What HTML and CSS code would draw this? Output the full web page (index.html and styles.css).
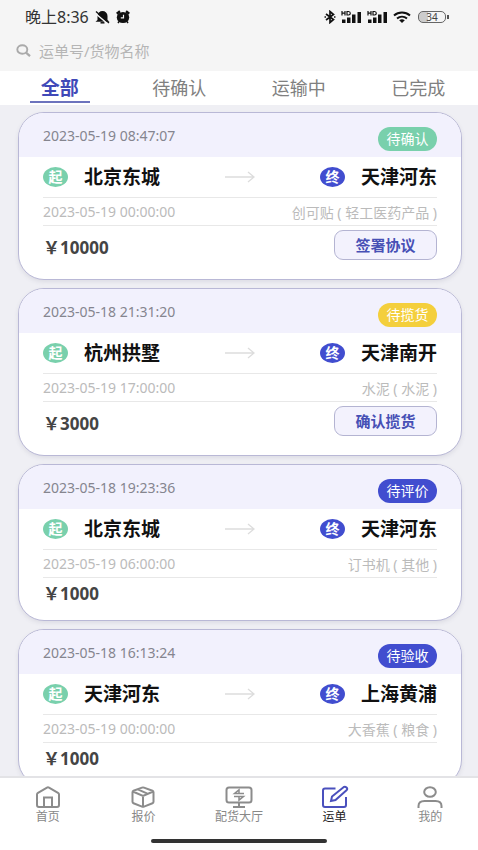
FILE: index.html
```html
<!DOCTYPE html>
<html lang="zh-CN">
<head>
<meta charset="utf-8">
<meta name="viewport" content="width=device-width, initial-scale=1">
<title>运单</title>
<link rel="stylesheet" href="styles.css">
</head>
<body>
<div class="app">
  <header class="top">
    <div class="status-bar">
      <div class="status-group status-left">
        <span class="clock">晚上8:36</span>
        <svg width="15" height="14" viewBox="0 0 15 14"><path d="M2.500 10V6a5 5 0 0 1 10 0v4l2 1.800H.5z" fill="#111"/><path d="M5.500 12.800h4" stroke="#111" stroke-width="1.500"/><path d="M0 3l13 11" stroke="#f5f5f5" stroke-width="1.500"/><path d="M1 1.500l13 11.500" stroke="#111" stroke-width="1.300"/></svg>
        <svg width="14" height="14" viewBox="0 0 14 14"><ellipse cx="7" cy="7.500" rx="6.200" ry="5.500" fill="#111"/><path d="M.8 3.800L4 1.200M13.200 3.800L10 1.200" stroke="#111" stroke-width="2.400"/><path d="M3 11.500L2 13M11 11.500l1 1.500" stroke="#111" stroke-width="1.500"/><path d="M7.500 4.800v3H4.800" stroke="#f5f5f5" stroke-width="1.200" fill="none"/></svg>
      </div>
      <div class="status-group status-right">
        <svg width="12" height="14" viewBox="0 0 12 14"><path d="M2 4l7.500 5.500L6 12.500v-11l3.500 3L2 10" fill="none" stroke="#111" stroke-width="1.700"/><path d="M.5 7h1.500M10 7h1.500" stroke="#111" stroke-width="1.500"/></svg>
        <svg width="21" height="14" viewBox="0 0 21 14"><use href="#signal"/></svg>
        <svg width="21" height="14" viewBox="0 0 21 14"><use href="#signal"/></svg>
        <svg width="18" height="14" viewBox="0 0 18 14"><path d="M1 5.500a12 12 0 0 1 16 0M4 8.500a8 8 0 0 1 10 0" fill="none" stroke="#111" stroke-width="2"/><path d="M6.200 10.300a5 5 0 0 1 5.600 0L9 13z" fill="#111"/></svg>
        <span class="battery"><span class="battery-level">34</span></span>
      </div>
    </div>
    <label class="search">
      <svg width="15" height="13" viewBox="0 0 15 13"><ellipse cx="6.300" cy="5.500" rx="5" ry="4.300" fill="none" stroke="#aaa" stroke-width="1.900"/><path d="M10 8.700l4 3.500" stroke="#aaa" stroke-width="2.200"/></svg>
      <input type="search" placeholder="运单号/货物名称" aria-label="运单号/货物名称">
    </label>
  </header>

  <nav class="tabs">
    <button class="tab active" type="button">全部</button>
    <button class="tab" type="button">待确认</button>
    <button class="tab" type="button">运输中</button>
    <button class="tab" type="button">已完成</button>
  </nav>

  <main class="orders">
    <article class="card">
      <div class="card-head"><time>2023-05-19 08:47:07</time><span class="tag green">待确认</span></div>
      <div class="card-body">
        <div class="route">
          <div class="place"><span class="dot start">起</span><strong>北京东城</strong></div>
          <svg class="arrow" width="30" height="14" viewBox="0 0 30 14"><use href="#arrow"/></svg>
          <div class="place"><span class="dot end">终</span><strong>天津河东</strong></div>
        </div>
        <div class="goods"><time>2023-05-19 00:00:00</time><span>创可贴 ( 轻工医药产品 )</span></div>
        <div class="pay"><span class="price">￥10000</span><button class="action" type="button">签署协议</button></div>
      </div>
    </article>

    <article class="card">
      <div class="card-head"><time>2023-05-18 21:31:20</time><span class="tag yellow">待揽货</span></div>
      <div class="card-body">
        <div class="route">
          <div class="place"><span class="dot start">起</span><strong>杭州拱墅</strong></div>
          <svg class="arrow" width="30" height="14" viewBox="0 0 30 14"><use href="#arrow"/></svg>
          <div class="place"><span class="dot end">终</span><strong>天津南开</strong></div>
        </div>
        <div class="goods"><time>2023-05-19 17:00:00</time><span>水泥 ( 水泥 )</span></div>
        <div class="pay"><span class="price">￥3000</span><button class="action" type="button">确认揽货</button></div>
      </div>
    </article>

    <article class="card">
      <div class="card-head"><time>2023-05-18 19:23:36</time><span class="tag blue">待评价</span></div>
      <div class="card-body">
        <div class="route">
          <div class="place"><span class="dot start">起</span><strong>北京东城</strong></div>
          <svg class="arrow" width="30" height="14" viewBox="0 0 30 14"><use href="#arrow"/></svg>
          <div class="place"><span class="dot end">终</span><strong>天津河东</strong></div>
        </div>
        <div class="goods"><time>2023-05-19 06:00:00</time><span>订书机 ( 其他 )</span></div>
        <div class="pay"><span class="price">￥1000</span></div>
      </div>
    </article>

    <article class="card">
      <div class="card-head"><time>2023-05-18 16:13:24</time><span class="tag blue">待验收</span></div>
      <div class="card-body">
        <div class="route">
          <div class="place"><span class="dot start">起</span><strong>天津河东</strong></div>
          <svg class="arrow" width="30" height="14" viewBox="0 0 30 14"><use href="#arrow"/></svg>
          <div class="place"><span class="dot end">终</span><strong>上海黄浦</strong></div>
        </div>
        <div class="goods"><time>2023-05-19 00:00:00</time><span>大香蕉 ( 粮食 )</span></div>
        <div class="pay"><span class="price">￥1000</span></div>
      </div>
    </article>
  </main>

  <footer class="bottom">
    <nav class="menu">
      <a href="#home"><svg width="26" height="24" viewBox="0 0 26 24"><path d="M2 9.500q0-1 1-1.600L12 2.600q1-.6 2 0l9 5.300q1 .6 1 1.600V20q0 2-2 2H4q-2 0-2-2z"/><path d="M9 22V12.500h8V22"/></svg>首页</a>
      <a href="#quote"><svg width="26" height="24" viewBox="0 0 26 24"><path d="M12 2.600q1-.4 2 0l8.500 3.200q1 .4 1 1.400v9.600q0 1-1 1.400L14 21.600q-1 .4-2 0l-8.500-3.400q-1-.4-1-1.400V7.200q0-1 1-1.400zM2.800 6.500L13 11l10.200-4.500M13 11v11M7.800 4.300L18 8.800"/></svg>报价</a>
      <a href="#hall"><svg width="28" height="24" viewBox="0 0 28 24"><rect x="1.500" y="2.500" width="25" height="15" rx="2.500"/><path d="M14 17.500V22M8 22h12"/><path d="M19 8.500H9.500L14 4.800V8M9 11.500h9.500L14 15.200V12" stroke-width="1.500"/></svg>配货大厅</a>
      <a href="#orders" class="current"><svg width="28" height="24" viewBox="0 0 28 24"><path d="M14.500 3.500H4q-2 0-2 2V20q0 2 2 2h19q2 0 2-2v-8"/><path d="M10 16l1-4.500L22.500 2.200q1.500-1 3 .3 1.500 1.500 0 2.800L14.500 15z"/></svg>运单</a>
      <a href="#me"><svg width="26" height="24" viewBox="0 0 26 24"><ellipse cx="13" cy="7" rx="5.800" ry="4.800"/><path d="M1.500 23v-2q0-5 6-5h11q6 0 6 5v2"/></svg>我的</a>
    </nav>
    <div class="home-bar"></div>
  </footer>
</div>

<svg class="symbols" aria-hidden="true">
  <symbol id="signal" viewBox="0 0 21 14"><path d="M1 9.500h3.500V13H1zM6 7.500h3.500V13H6zM11 4.500h3.500V13H11zM16.500 2h3.500v11h-3.500z" fill="#111"/><path d="M1 1v4.500M4 1v4.500M1 3.200h3M6 1.500v3.500h1.500q1.800 0 1.800-1.700T7.500 1.500z" fill="none" stroke="#111" stroke-width="1.200"/></symbol>
  <symbol id="arrow" viewBox="0 0 30 14"><path d="M0 7h29M23 2l6 5-6 5" fill="none" stroke="#ddd" stroke-width="1.300"/></symbol>
</svg>
</body>
</html>
```
FILE: styles.css
```css
* { box-sizing: border-box; }

body {
  margin: 0;
  font-family: "Noto Sans", "Noto Sans CJK SC", sans-serif;
  font-size: 14px;
  color: #111;
}

button, input { font: inherit; }

.symbols { position: absolute; width: 0; height: 0; }

.app {
  height: 100vh;
  display: flex;
  flex-direction: column;
  background: #efeff4;
}

.top { background: #f5f5f5; }

.status-bar {
  display: flex;
  justify-content: space-between;
  align-items: center;
  height: 34px;
  padding: 0 32px 0 25px;
}

.status-group { display: flex; align-items: center; }
.status-left { gap: 6px; }
.status-right { gap: 5px; }
.clock { font-size: 16px; line-height: 24px; color: #333; }

.battery {
  position: relative;
  width: 28px;
  height: 12px;
  margin-left: 2px;
  border: 1px solid #666;
  border-radius: 5px;
  background: linear-gradient(90deg, #ccc 34%, transparent 34%);
}
.battery::after {
  content: "";
  position: absolute;
  right: -4px;
  top: 3px;
  width: 2px;
  height: 4px;
  background: #555;
}
.battery-level {
  display: block;
  font-size: 10px;
  line-height: 10px;
  text-align: center;
  color: #444;
}

.search {
  display: flex;
  align-items: center;
  gap: 8px;
  height: 37px;
  padding: 0 16px 4px;
}
.search input {
  flex: 1;
  min-width: 0;
  padding: 0;
  border: 0;
  outline: 0;
  background: none;
  font-size: 15px;
}
.search input::placeholder { color: #b5b5b5; }

.tabs {
  display: grid;
  grid-template-columns: repeat(4, 1fr);
  height: 34px;
  background: #fff;
}
.tab {
  position: relative;
  padding: 0;
  border: 0;
  background: none;
  font-size: 18px;
  line-height: 32px;
  color: #808080;
}
.tab.active { font-size: 19px; font-weight: 700; color: #4049b8; }
.tab.active::after {
  content: "";
  position: absolute;
  left: 25%;
  right: 25%;
  bottom: 2px;
  height: 2px;
  background: #6c73bd;
}

.orders {
  flex: 1;
  min-height: 0;
  overflow: hidden;
  display: flex;
  flex-direction: column;
  gap: 8px;
  padding: 7px 16px 0 18px;
}

.card {
  flex: none;
  overflow: hidden;
  border: 1px solid #b9b8d6;
  border-radius: 26px;
  background: #fff;
  box-shadow: 0 2px 4px #dcdce4;
}
.card-head {
  display: flex;
  justify-content: space-between;
  align-items: center;
  height: 44px;
  padding: 0 24px;
  background: #f2f1fd;
  color: #85858f;
}
.tag {
  align-self: flex-end;
  width: 59px;
  margin-bottom: 6px;
  border-radius: 12px;
  line-height: 24px;
  text-align: center;
  color: #fff;
}
.green { background: #79d0ac; }
.yellow { background: #f4cf3c; }
.blue { background: #414dcf; }

.card-body { padding: 0 24px; }
.route, .goods {
  display: flex;
  justify-content: space-between;
  align-items: center;
  border-bottom: 1px solid #e8e8e8;
}
.route { height: 41px; }
.goods { height: 28px; color: #bbb; }
.place { display: flex; align-items: center; gap: 16px; }
.place strong { font-size: 19px; line-height: 28px; }
.dot {
  width: 25px;
  border-radius: 50%;
  font-size: 14px;
  font-weight: 700;
  line-height: 20px;
  text-align: center;
  color: #fff;
}
.start { background: #79d0ac; }
.end { background: #414dcf; }

.pay {
  display: flex;
  justify-content: space-between;
  align-items: flex-end;
  padding: 4px 0 19px;
}
.price {
  font-size: 17px;
  font-weight: 700;
  line-height: 24px;
  color: #444;
}
.pay:not(:has(.action)) { padding-bottom: 14px; }
.action {
  width: 103px;
  height: 30px;
  padding: 0;
  border: 1px solid #b4b4d2;
  border-radius: 9px;
  background: #f3f2fd;
  font-size: 15px;
  font-weight: 700;
  line-height: 26px;
  color: #4750b5;
}

.bottom {
  height: 74px;
  border-top: 2px solid #e3e3e6;
  background: #fff;
}
.menu { display: grid; grid-template-columns: repeat(5, 1fr); padding-top: 7px; }
.menu a {
  display: flex;
  flex-direction: column;
  align-items: center;
  font-size: 12px;
  line-height: 16px;
  color: #888;
  text-decoration: none;
}
.menu svg { fill: none; stroke: #8c8c8c; stroke-width: 2; }
.menu .current { color: #222; }
.menu .current svg { stroke: #4a50bd; }

.home-bar {
  width: 37%;
  height: 4px;
  margin: 14px auto 0;
  border-radius: 2px;
  background: #333;
}
```
